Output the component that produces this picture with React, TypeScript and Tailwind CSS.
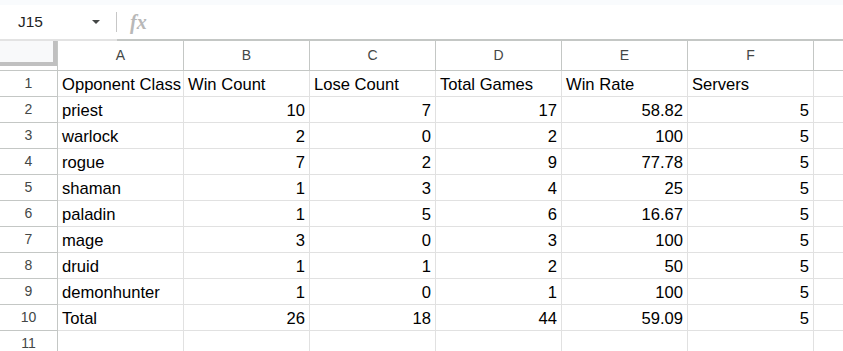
const cols = ['A', 'B', 'C', 'D', 'E', 'F', ''];

type Cell = string | number;

const rows: Cell[][] = [
  ['Opponent Class', 'Win Count', 'Lose Count', 'Total Games', 'Win Rate', 'Servers'],
  ['priest', 10, 7, 17, 58.82, 5],
  ['warlock', 2, 0, 2, 100, 5],
  ['rogue', 7, 2, 9, 77.78, 5],
  ['shaman', 1, 3, 4, 25, 5],
  ['paladin', 1, 5, 6, 16.67, 5],
  ['mage', 3, 0, 3, 100, 5],
  ['druid', 1, 1, 2, 50, 5],
  ['demonhunter', 1, 0, 1, 100, 5],
  ['Total', 26, 18, 44, 59.09, 5],
  [],
];

function FormulaBar() {
  return (
    <div className="flex h-[34px] items-center bg-white">
      <div className="w-[92px] pl-[18px] text-[15.5px] text-[#1f1f1f]">J15</div>
      <div className="h-0 w-0 border-x-[4px] border-t-[4px] border-x-transparent border-t-[#444746]" />
      <div className="ml-[16px] h-[20px] w-px bg-[#c7c7c7]" />
      <div className="ml-[13px] font-['Liberation_Serif',serif] text-[20px] font-bold italic text-[#b8b8b8]">fx</div>
    </div>
  );
}

export default function App() {
  return (
    <div className="h-[351px] w-[843px] overflow-hidden bg-white font-['Liberation_Sans',Arial,sans-serif]">
      <div className="h-[5px] bg-[#f9fbfd]" />
      <FormulaBar />
      <div className="flex h-[2px]">
        <div className="w-[117px] bg-[#e3e3e3]" />
        <div className="flex-1 bg-[#c4c7c5]" />
      </div>

      {/* column headers */}
      <div className="flex h-[30px]">
        <div className="h-[30px] w-[58px] shrink-0 border-b border-r border-[#c4c7c5]">
          <div className="h-[25px] w-[57px] border-b-[4px] border-r-[4px] border-[#c0c0c0] bg-[#f8f9fa]" />
        </div>
        {cols.map((c, i) => (
          <div
            key={i}
            className={`flex h-[30px] shrink-0 items-center justify-center border-b border-r border-[#c4c7c5] text-[14px] text-[#444746] ${i === 6 ? 'w-[30px]' : 'w-[126px]'}`}
          >
            {c}
          </div>
        ))}
      </div>

      {rows.map((r, ri) => (
        <div key={ri} className="flex h-[26px]">
          <div className="flex h-[26px] w-[58px] shrink-0 items-center justify-center border-b border-r border-[#c4c7c5] pb-[1px] text-[14px] text-[#444746]">
            {ri + 1}
          </div>
          {cols.map((_, ci) => {
            const v = r[ci];
            const isNum = typeof v === 'number';
            return (
              <div
                key={ci}
                className={`flex h-[26px] shrink-0 items-end whitespace-nowrap border-b border-r border-[#e1e1e1] px-[4px] pb-[2px] text-[16.6px] leading-[19px] text-black ${isNum ? 'justify-end' : 'justify-start'} ${ci === 6 ? 'w-[30px]' : 'w-[126px]'}`}
              >
                {v !== undefined ? String(v) : ''}
              </div>
            );
          })}
        </div>
      ))}
    </div>
  );
}
